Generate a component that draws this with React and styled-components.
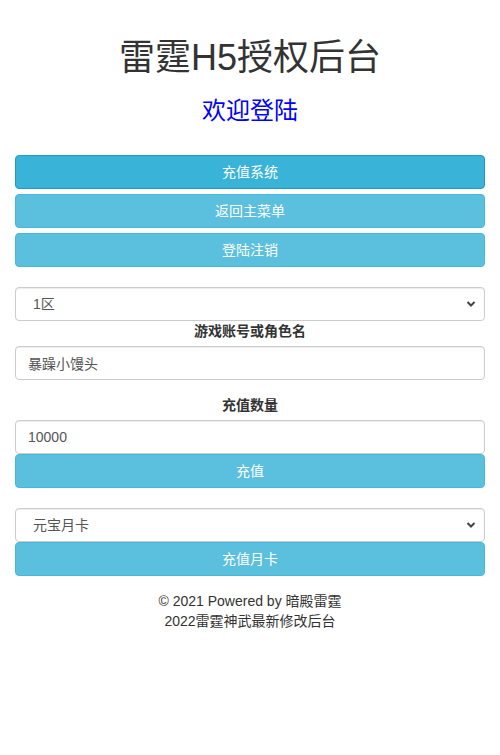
import styled, { createGlobalStyle } from 'styled-components'

const GlobalStyle = createGlobalStyle`
  html, body {
    margin: 0;
    padding: 0;
    background: #fff;
  }
  body {
    font-family: "Liberation Sans", "Noto Sans CJK SC", sans-serif;
    font-size: 14px;
    line-height: 1.42857;
    color: #333;
  }
  * {
    box-sizing: border-box;
  }
`

const Container = styled.div`
  padding: 38px 15px 0;
`

const Title = styled.h1`
  margin: 0 0 20px;
  font-size: 36px;
  font-weight: 400;
  line-height: 1.1;
  text-align: center;
  color: #333;
`

const Subtitle = styled.h3`
  margin: 0 0 31px;
  font-size: 24px;
  font-weight: 400;
  line-height: 1.1;
  text-align: center;
  color: #0000ff;
`

const Menu = styled.div`
  display: flex;
  flex-direction: column;
  gap: 5px;
  margin-bottom: 20px;
`

const Button = styled.button`
  display: block;
  width: 100%;
  height: 34px;
  padding: 6px 12px;
  font-family: inherit;
  font-size: 14px;
  line-height: 20px;
  color: #fff;
  text-align: center;
  background: ${p => (p.$active ? '#39b3d7' : '#5bc0de')};
  border: 1px solid ${p => (p.$active ? '#269abc' : '#46b8da')};
  border-radius: 4px;
  cursor: pointer;
`

const Group = styled.div`
  margin-bottom: ${p => p.$gap || 0}px;
`

const Label = styled.label`
  display: block;
  margin-bottom: 5px;
  font-weight: 700;
  line-height: 20px;
  text-align: center;
  color: #333;
`

const Input = styled.input`
  display: block;
  width: 100%;
  height: 34px;
  padding: 6px 12px;
  font-family: inherit;
  font-size: 14px;
  line-height: 20px;
  color: #555;
  background: #fff;
  border: 1px solid #ccc;
  border-radius: 4px;
  box-shadow: inset 0 1px 1px rgba(0, 0, 0, 0.075);
  outline: none;
`

const SelectWrap = styled.div`
  position: relative;
`

const Select = styled.select`
  display: block;
  width: 100%;
  height: 34px;
  padding: 6px 12px 6px 17px;
  font-family: inherit;
  font-size: 14px;
  line-height: 20px;
  color: #555;
  background: #fff;
  border: 1px solid #ccc;
  border-radius: 4px;
  box-shadow: inset 0 1px 1px rgba(0, 0, 0, 0.075);
  appearance: none;
  outline: none;
`

const Chevron = styled.svg`
  position: absolute;
  right: 9px;
  top: 13px;
  width: 10px;
  height: 8px;
  pointer-events: none;
`

const Footer = styled.div`
  margin-top: 15px;
  text-align: center;
  line-height: 20px;
  color: #333;
`

function DropDown({ options }) {
  return (
    <SelectWrap>
      <Select defaultValue={options[0]}>
        {options.map(o => (
          <option key={o}>{o}</option>
        ))}
      </Select>
      <Chevron viewBox="0 0 10 8">
        <path d="M1.5 2 L5 5.5 L8.5 2" fill="none" stroke="#444" strokeWidth="2" />
      </Chevron>
    </SelectWrap>
  )
}

export default function App() {
  return (
    <Container>
      <GlobalStyle />
      <Title>雷霆H5授权后台</Title>
      <Subtitle>欢迎登陆</Subtitle>
      <Menu>
        <Button $active>充值系统</Button>
        <Button>返回主菜单</Button>
        <Button>登陆注销</Button>
      </Menu>

      <DropDown options={['1区', '2区', '3区']} />
      <Group $gap={15}>
        <Label>游戏账号或角色名</Label>
        <Input defaultValue="暴躁小馒头" />
      </Group>
      <Group $gap={20}>
        <Label>充值数量</Label>
        <Input defaultValue="10000" />
        <Button>充值</Button>
      </Group>

      <DropDown options={['元宝月卡', '至尊月卡']} />
      <Button>充值月卡</Button>

      <Footer>
        © 2021 Powered by 暗殿雷霆
        <br />
        2022雷霆神武最新修改后台
      </Footer>
    </Container>
  )
}
